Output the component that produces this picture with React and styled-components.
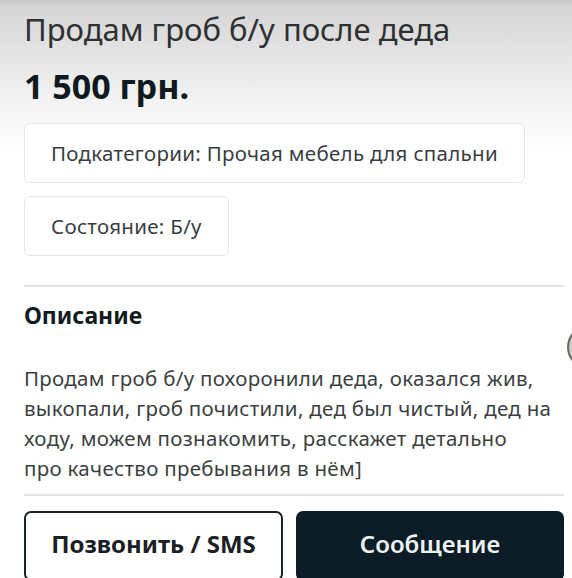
import React from "react";
import styled, { createGlobalStyle } from "styled-components";

const Global = createGlobalStyle`
  html, body { margin: 0; padding: 0; }
  body {
    width: 572px;
    height: 578px;
    overflow: hidden;
    background: #ffffff;
    font-family: "Noto Sans", "Open Sans", sans-serif;
  }
`;

const Page = styled.div`
  position: relative;
  width: 572px;
  height: 578px;
  overflow: hidden;
  background: linear-gradient(180deg, #c4c7c9 0px, #d5d5d5 6px, #e3e3e3 50px, #f4f4f4 105px, #ffffff 150px);
  padding: 0 0 0 24px;
  box-sizing: border-box;
  display: flex;
  flex-direction: column;
`;

const Title = styled.h1`
  margin: 9px 0 0;
  font-size: 31px;
  font-weight: 400;
  line-height: 40px;
  color: #2e3031;
`;

const Price = styled.div`
  margin-top: 17px;
  font-size: 34px;
  font-weight: 700;
  line-height: 40px;
  color: #0f1a20;
`;

const Chips = styled.div`
  margin-top: 17px;
  display: flex;
  flex-direction: column;
  align-items: flex-start;
  gap: 13px;
`;

const Chip = styled.div`
  height: 60px;
  box-sizing: border-box;
  padding: 0 26px;
  display: flex;
  align-items: center;
  border: 1px solid #e6e6e6;
  border-radius: 6px;
  background: #fff;
  font-size: 20.5px;
  color: #3a3d3f;
  letter-spacing: 0.3px;
`;

const Divider = styled.div`
  flex: none;
  align-self: stretch;
  margin: ${(p) => p.$top}px 8px 0 0;
  height: 2px;
  background: #e3e3e3;
`;

const SectionTitle = styled.h2`
  margin: 13px 0 0;
  font-size: 23px;
  font-weight: 700;
  line-height: 30px;
  color: #121b20;
`;

const Description = styled.p`
  margin: 33px 0 0;
  font-size: 20.5px;
  line-height: 30px;
  color: #3c3f41;
  letter-spacing: 0.3px;
  white-space: nowrap;
`;

const Actions = styled.div`
  margin-top: 15px;
  display: grid;
  grid-template-columns: 259px 268px;
  gap: 13px;
`;

const Button = styled.button`
  height: 70px;
  box-sizing: border-box;
  border-radius: 7px;
  font-family: inherit;
  font-size: 24px;
  font-weight: ${(p) => (p.$primary ? 600 : 700)};
  cursor: pointer;
  border: 2px solid ${(p) => (p.$primary ? "#0b1c26" : "#1b2226")};
  background: ${(p) => (p.$primary ? "#0b1c26" : "#ffffff")};
  color: ${(p) => (p.$primary ? "#eef1f2" : "#1a2024")};
  padding: 0 0 6px;
`;

const EdgeBadge = styled.div`
  position: absolute;
  left: 567px;
  top: 325px;
  width: 40px;
  height: 40px;
  border-radius: 50%;
  background: #cfcfcb;
  border: 2px solid #6b6b66;
`;

export default function App() {
  return (
    <>
      <Global />
      <Page>
        <Title>Продам гроб б/у после деда</Title>
        <Price>1 500 грн.</Price>
        <Chips>
          <Chip>Подкатегории: Прочая мебель для спальни</Chip>
          <Chip>Состояние: Б/у</Chip>
        </Chips>
        <Divider $top={29} />
        <SectionTitle>Описание</SectionTitle>
        <Description>
          Продам гроб б/у похоронили деда, оказался жив,
          <br />
          выкопали, гроб почистили, дед был чистый, дед на
          <br />
          ходу, можем познакомить, расскажет детально
          <br />
          про качество пребывания в нём]
        </Description>
        <Divider $top={11} />
        <Actions>
          <Button>Позвонить / SMS</Button>
          <Button $primary>Сообщение</Button>
        </Actions>
        <EdgeBadge />
      </Page>
    </>
  );
}
